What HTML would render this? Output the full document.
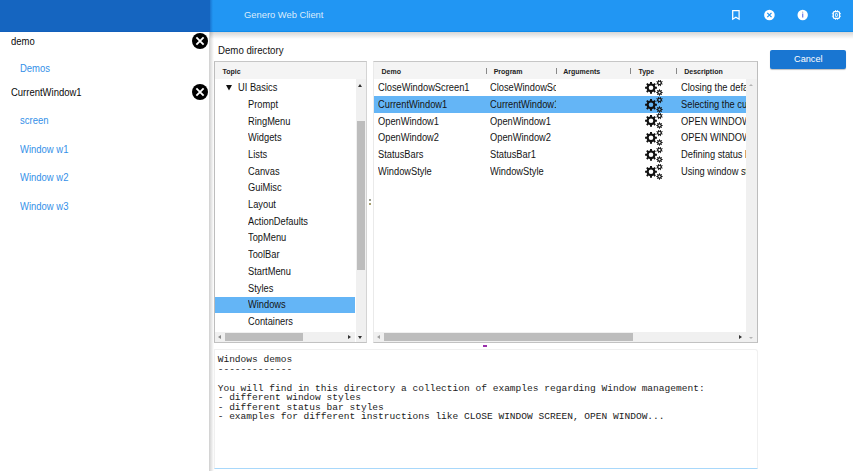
<!DOCTYPE html>
<html><head><meta charset="utf-8">
<style>
*{box-sizing:border-box;margin:0;padding:0}
html,body{width:853px;height:471px;overflow:hidden;background:#fff}
body{position:relative;font-family:"Liberation Sans",sans-serif;color:#222;font-size:9.3px}
.a{position:absolute;white-space:nowrap}
#hdrL{left:0;top:0;width:210px;height:32px;background:#1565c0}
#hdrR{left:210px;top:0;width:643px;height:32px;background:#2196f3}
#hshadow{left:210px;top:32px;width:643px;height:7px;background:linear-gradient(#d6d6d6,#fff)}
#side{left:0;top:32px;width:209px;height:439px;background:#fff}
#sshadow{left:209px;top:32px;width:5px;height:439px;background:linear-gradient(90deg,rgba(0,0,0,.19),rgba(0,0,0,0))}
.title{left:243.5px;top:9.2px;color:#dcecfc;font-size:9.8px;transform:scaleX(0.955);transform-origin:0 0;}
.st{font-size:10.2px;color:#0a0a0a;transform:scaleX(0.93);transform-origin:0 0;}
.lk{font-size:10.2px;color:#3490e8;transform:scaleX(0.93);transform-origin:0 0;}
.panel{border:1px solid #c4c4c4;background:#fff;overflow:hidden}
.hdr{position:absolute;left:0;top:0;right:0;height:17px;background:#f4f4f4}
.hb{position:absolute;top:5.5px;font-weight:bold;font-size:7px;color:#222}
.sep{position:absolute;top:5.6px;width:1px;height:6px;background:#888}
.row{position:absolute;left:0;height:16.7px;font-size:9.3px;color:#141414}
.row>span{position:absolute;top:2.7px;font-size:10px;transform:scaleX(0.93);transform-origin:0 0;}
.cell{position:absolute;top:0;height:16.7px;overflow:hidden}
.cell span{position:absolute;left:0;top:2.7px;font-size:10px;transform:scaleX(0.93);transform-origin:0 0;}
.sel{background:#64b5f6}
.tri{width:0;height:0;border-left:2.6px solid transparent;border-right:2.6px solid transparent;border-top:5.2px solid #111;top:5.8px!important}
.gear{position:absolute}
.trk{position:absolute;background:#f0f0f0}
.thumb{position:absolute;background:#bdbdbd}
.arr{position:absolute;width:0;height:0}
.up{border-left:2.6px solid transparent;border-right:2.6px solid transparent;border-bottom:3px solid #333}
.dn{border-left:2.6px solid transparent;border-right:2.6px solid transparent;border-top:3px solid #333}
.lf{border-top:2.5px solid transparent;border-bottom:2.5px solid transparent;border-right:3px solid #444}
.rt{border-top:2.5px solid transparent;border-bottom:2.5px solid transparent;border-left:3px solid #333}
.mono{font-family:"Liberation Mono",monospace;font-size:9.55px;line-height:9.5px;color:#222;white-space:pre}
</style></head><body>
<svg width="0" height="0" style="position:absolute"><defs>
<symbol id="cogs" viewBox="0 0 20 17"><path fill="#111" fill-rule="evenodd" d="M11.40 6.84 L12.91 6.79 L12.91 8.81 L11.40 8.76 L10.79 10.23 L11.90 11.27 L10.47 12.70 L9.43 11.59 L7.96 12.20 L8.01 13.71 L5.99 13.71 L6.04 12.20 L4.57 11.59 L3.53 12.70 L2.10 11.27 L3.21 10.23 L2.60 8.76 L1.09 8.81 L1.09 6.79 L2.60 6.84 L3.21 5.37 L2.10 4.33 L3.53 2.90 L4.57 4.01 L6.04 3.40 L5.99 1.89 L8.01 1.89 L7.96 3.40 L9.43 4.01 L10.47 2.90 L11.90 4.33 L10.79 5.37Z M9.30 7.80 A2.3 2.3 0 1 0 4.70 7.80 A2.3 2.3 0 1 0 9.30 7.80Z M17.76 3.35 L18.73 3.95 L18.53 4.44 L17.41 4.18 L16.78 4.81 L17.04 5.93 L16.55 6.13 L15.95 5.16 L15.05 5.16 L14.45 6.13 L13.96 5.93 L14.22 4.81 L13.59 4.18 L12.47 4.44 L12.27 3.95 L13.24 3.35 L13.24 2.45 L12.27 1.85 L12.47 1.36 L13.59 1.62 L14.22 0.99 L13.96 -0.13 L14.45 -0.33 L15.05 0.64 L15.95 0.64 L16.55 -0.33 L17.04 -0.13 L16.78 0.99 L17.41 1.62 L18.53 1.36 L18.73 1.85 L17.76 2.45Z M16.60 2.90 A1.1 1.1 0 1 0 14.40 2.90 A1.1 1.1 0 1 0 16.60 2.90Z M17.76 12.05 L18.89 12.23 L18.89 12.77 L17.76 12.95 L17.41 13.78 L18.09 14.71 L17.71 15.09 L16.78 14.41 L15.95 14.76 L15.77 15.89 L15.23 15.89 L15.05 14.76 L14.22 14.41 L13.29 15.09 L12.91 14.71 L13.59 13.78 L13.24 12.95 L12.11 12.77 L12.11 12.23 L13.24 12.05 L13.59 11.22 L12.91 10.29 L13.29 9.91 L14.22 10.59 L15.05 10.24 L15.23 9.11 L15.77 9.11 L15.95 10.24 L16.78 10.59 L17.71 9.91 L18.09 10.29 L17.41 11.22Z M16.60 12.50 A1.1 1.1 0 1 0 14.40 12.50 A1.1 1.1 0 1 0 16.60 12.50Z"/></symbol>
<symbol id="xc" viewBox="0 0 16 16"><circle cx="8" cy="8" r="8" fill="#000"/><path d="M4.4 4.4L11.6 11.6M11.6 4.4L4.4 11.6" stroke="#fff" stroke-width="1.85"/></symbol>
</defs></svg>
<div class="a" id="hdrL"></div>
<div class="a" id="hdrR"></div>
<div class="a" id="hshadow"></div>
<div class="a" style="left:210px;top:31px;width:643px;height:1px;background:#128cea"></div>
<div class="a" style="left:0;top:31px;width:210px;height:1px;background:#125fbb"></div>
<div class="a" style="left:209px;top:0;width:4px;height:32px;background:linear-gradient(90deg,rgba(21,101,192,.9),rgba(21,101,192,0))"></div>
<div class="a" id="side"></div>
<div class="a" id="sshadow"></div>
<div class="a title">Genero Web Client</div>

<!-- header icons -->
<svg class="a" style="left:726px;top:6px" width="20" height="20" viewBox="0 0 20 20"><path d="M6.7 4.7H13.1V13.2L9.9 11.3L6.7 13.2Z" fill="none" stroke="#fff" stroke-width="1.25" stroke-linejoin="miter"/></svg>
<svg class="a" style="left:759px;top:5px" width="21" height="20" viewBox="0 0 21 20"><circle cx="10.4" cy="10" r="5.3" fill="#fff"/><path d="M8.3 7.9L12.5 12.1M12.5 7.9L8.3 12.1" stroke="#2196f3" stroke-width="1.3"/></svg>
<svg class="a" style="left:792px;top:5px" width="21" height="20" viewBox="0 0 21 20"><circle cx="10.7" cy="10" r="5.2" fill="#fff"/><path d="M10.7 8.6V12.6" stroke="#6a7be8" stroke-width="1.2"/><circle cx="10.7" cy="7.2" r="0.6" fill="#9ab"/></svg>
<svg class="a" style="left:826px;top:5px" width="20" height="20" viewBox="0 0 20 20"><rect x="7.25" y="6.55" width="6.3" height="6.8" rx="1.3" fill="none" stroke="#fff" stroke-width="1.3"/><path d="M9.5 5.1V6M11.4 5.1V6M9.5 13.9V14.8M11.4 13.9V14.8M5.9 8.6H6.7M5.9 11.3H6.7M14.1 8.6H14.9M14.1 11.3H14.9" stroke="#fff" stroke-width="0.9"/><rect x="9.45" y="8.45" width="1.9" height="3.1" rx="0.5" fill="none" stroke="#fff" stroke-width="0.85"/></svg>

<!-- sidebar -->
<div class="a st" style="left:10.5px;top:36px">demo</div>
<svg class="a" style="left:192px;top:33.2px" width="16" height="16"><use href="#xc"/></svg>
<div class="a lk" style="left:20.3px;top:63px">Demos</div>
<div class="a st" style="left:10.5px;top:87px">CurrentWindow1</div>
<svg class="a" style="left:192px;top:84.2px" width="16" height="16"><use href="#xc"/></svg>
<div class="a lk" style="left:19.6px;top:115px">screen</div>
<div class="a lk" style="left:19.6px;top:143.5px">Window w1</div>
<div class="a lk" style="left:19.6px;top:172px">Window w2</div>
<div class="a lk" style="left:19.6px;top:200.7px">Window w3</div>

<!-- main -->
<div class="a" style="left:218px;top:44.5px;font-size:10.4px;color:#111;transform:scaleX(0.93);transform-origin:0 0;">Demo directory</div>

<div class="a" style="left:770px;top:49.5px;width:76px;height:19.5px;background:#1976d2;border-radius:2px;box-shadow:0 1px 1px rgba(0,0,0,.25);"></div>
<div class="a" style="left:793.6px;top:52.6px;color:#fff;font-size:9.9px;transform:scaleX(0.93);transform-origin:0 0;">Cancel</div>

<!-- tree -->
<div class="a panel" style="left:214px;top:61px;width:153px;height:282px;border-color:#c6c6c6 #d4d4d4 #c2c2c2 #bdbdbd">
  <div class="hdr"></div>
  <div class="hb" style="left:7.4px">Topic</div>
<div class="row" style="top:17.50px;width:140px"><svg style="position:absolute;left:11.3px;top:5.4px" width="6" height="6" viewBox="0 0 6 6"><path d="M0 0H6L3 5.5Z" fill="#111"/></svg><span style="left:23px">UI Basics</span></div>
<div class="row" style="top:34.20px;width:140px"><span style="left:33px">Prompt</span></div>
<div class="row" style="top:50.90px;width:140px"><span style="left:33px">RingMenu</span></div>
<div class="row" style="top:67.60px;width:140px"><span style="left:33px">Widgets</span></div>
<div class="row" style="top:84.30px;width:140px"><span style="left:33px">Lists</span></div>
<div class="row" style="top:101.00px;width:140px"><span style="left:33px">Canvas</span></div>
<div class="row" style="top:117.70px;width:140px"><span style="left:33px">GuiMisc</span></div>
<div class="row" style="top:134.40px;width:140px"><span style="left:33px">Layout</span></div>
<div class="row" style="top:151.10px;width:140px"><span style="left:33px">ActionDefaults</span></div>
<div class="row" style="top:167.80px;width:140px"><span style="left:33px">TopMenu</span></div>
<div class="row" style="top:184.50px;width:140px"><span style="left:33px">ToolBar</span></div>
<div class="row" style="top:201.20px;width:140px"><span style="left:33px">StartMenu</span></div>
<div class="row" style="top:217.90px;width:140px"><span style="left:33px">Styles</span></div>
<div class="row sel" style="top:234.60px;width:140px"><span style="left:33px">Windows</span></div>
<div class="row" style="top:251.30px;width:140px"><span style="left:33px">Containers</span></div>
<div class="row" style="top:268.00px;width:140px"><span style="left:33px">Unused</span></div>
  <div class="trk" style="left:141px;top:17px;width:10px;height:263px"></div>
  <div class="thumb" style="left:142px;top:59px;width:8px;height:149px"></div>
  <div class="arr up" style="left:143px;top:21.5px"></div>
  <div class="arr dn" style="left:143px;top:274px"></div>
  <div class="trk" style="left:0;top:270px;width:140px;height:10px"></div>
  <div class="thumb" style="left:10px;top:271px;width:77.5px;height:7.5px"></div>
  <div class="arr lf" style="left:3.4px;top:272.5px;border-right-color:#8a8a8a"></div>
  <div class="arr rt" style="left:132.8px;top:272.5px"></div>
</div>

<!-- table -->
<div class="a panel" style="left:373px;top:61px;width:385px;height:282px;border-color:#c6c6c6 #bdbdbd #c2c2c2 #eaeaea">
  <div class="hdr"></div>
  <div class="hb" style="left:7.5px">Demo</div>
  <div class="sep" style="left:111.6px"></div>
  <div class="hb" style="left:119.7px">Program</div>
  <div class="sep" style="left:181.6px"></div>
  <div class="hb" style="left:189.2px">Arguments</div>
  <div class="sep" style="left:256.3px"></div>
  <div class="hb" style="left:264.4px">Type</div>
  <div class="sep" style="left:302.4px"></div>
  <div class="hb" style="left:310.2px">Description</div>
<div class="row" style="top:17.50px;width:371.5px"><div class="cell" style="left:4px;width:107px"><span>CloseWindowScreen1</span></div><div class="cell" style="left:116px;width:66px"><span>CloseWindowScreen1</span></div><svg class="gear" style="left:270px;top:0.5px" width="20" height="17" viewBox="0 0 20 17"><use href="#cogs"/></svg><div class="cell" style="left:306.5px;width:65px"><span>Closing the default screen</span></div></div>
<div class="row sel" style="top:34.20px;width:371.5px"><div class="cell" style="left:4px;width:107px"><span>CurrentWindow1</span></div><div class="cell" style="left:116px;width:66px"><span>CurrentWindow1</span></div><svg class="gear" style="left:270px;top:0.5px" width="20" height="17" viewBox="0 0 20 17"><use href="#cogs"/></svg><div class="cell" style="left:306.5px;width:65px"><span>Selecting the current window</span></div></div>
<div class="row" style="top:50.90px;width:371.5px"><div class="cell" style="left:4px;width:107px"><span>OpenWindow1</span></div><div class="cell" style="left:116px;width:66px"><span>OpenWindow1</span></div><svg class="gear" style="left:270px;top:0.5px" width="20" height="17" viewBox="0 0 20 17"><use href="#cogs"/></svg><div class="cell" style="left:306.5px;width:65px"><span>OPEN WINDOW with</span></div></div>
<div class="row" style="top:67.60px;width:371.5px"><div class="cell" style="left:4px;width:107px"><span>OpenWindow2</span></div><div class="cell" style="left:116px;width:66px"><span>OpenWindow2</span></div><svg class="gear" style="left:270px;top:0.5px" width="20" height="17" viewBox="0 0 20 17"><use href="#cogs"/></svg><div class="cell" style="left:306.5px;width:65px"><span>OPEN WINDOW with</span></div></div>
<div class="row" style="top:84.30px;width:371.5px"><div class="cell" style="left:4px;width:107px"><span>StatusBars</span></div><div class="cell" style="left:116px;width:66px"><span>StatusBar1</span></div><svg class="gear" style="left:270px;top:0.5px" width="20" height="17" viewBox="0 0 20 17"><use href="#cogs"/></svg><div class="cell" style="left:306.5px;width:65px"><span>Defining status bar</span></div></div>
<div class="row" style="top:101.00px;width:371.5px"><div class="cell" style="left:4px;width:107px"><span>WindowStyle</span></div><div class="cell" style="left:116px;width:66px"><span>WindowStyle</span></div><svg class="gear" style="left:270px;top:0.5px" width="20" height="17" viewBox="0 0 20 17"><use href="#cogs"/></svg><div class="cell" style="left:306.5px;width:65px"><span>Using window styles</span></div></div>
  <div class="trk" style="left:372px;top:17px;width:11px;height:263px"></div>
  <div class="arr up" style="left:375px;top:22px;border-left-width:2.5px;border-right-width:2.5px;border-bottom-width:2.5px;border-bottom-color:#b4b4b4"></div>
  <div class="arr dn" style="left:375px;top:274.5px;border-left-width:2.5px;border-right-width:2.5px;border-top-width:2.5px;border-top-color:#b4b4b4"></div>
  <div class="trk" style="left:0;top:270px;width:372px;height:10px"></div>
  <div class="thumb" style="left:10px;top:271px;width:249px;height:7.5px"></div>
  <div class="arr lf" style="left:3.4px;top:272.5px;border-right-color:#a0a0a0"></div>
  <div class="arr rt" style="left:364.5px;top:272.5px"></div>
</div>
<div class="a" style="left:483.2px;top:345.2px;width:3.5px;height:1.8px;background:#9a30aa"></div>
<div class="a" style="left:369px;top:199px;width:2px;height:1.6px;background:#9a9d90"></div>
<div class="a" style="left:369px;top:202.6px;width:2px;height:2.4px;background:#a8a070"></div>

<!-- text area -->
<div class="a" style="left:214px;top:349px;width:544px;height:120px;border:1px solid #f0f0f0;border-bottom:1px solid #a8d8fb;border-radius:0 3px 0 0"></div>
<div class="a mono" style="left:217.7px;top:355px">Windows demos
-------------

You will find in this directory a collection of examples regarding Window management:
- different window styles
- different status bar styles
- examples for different instructions like CLOSE WINDOW SCREEN, OPEN WINDOW...</div>

</body></html>
